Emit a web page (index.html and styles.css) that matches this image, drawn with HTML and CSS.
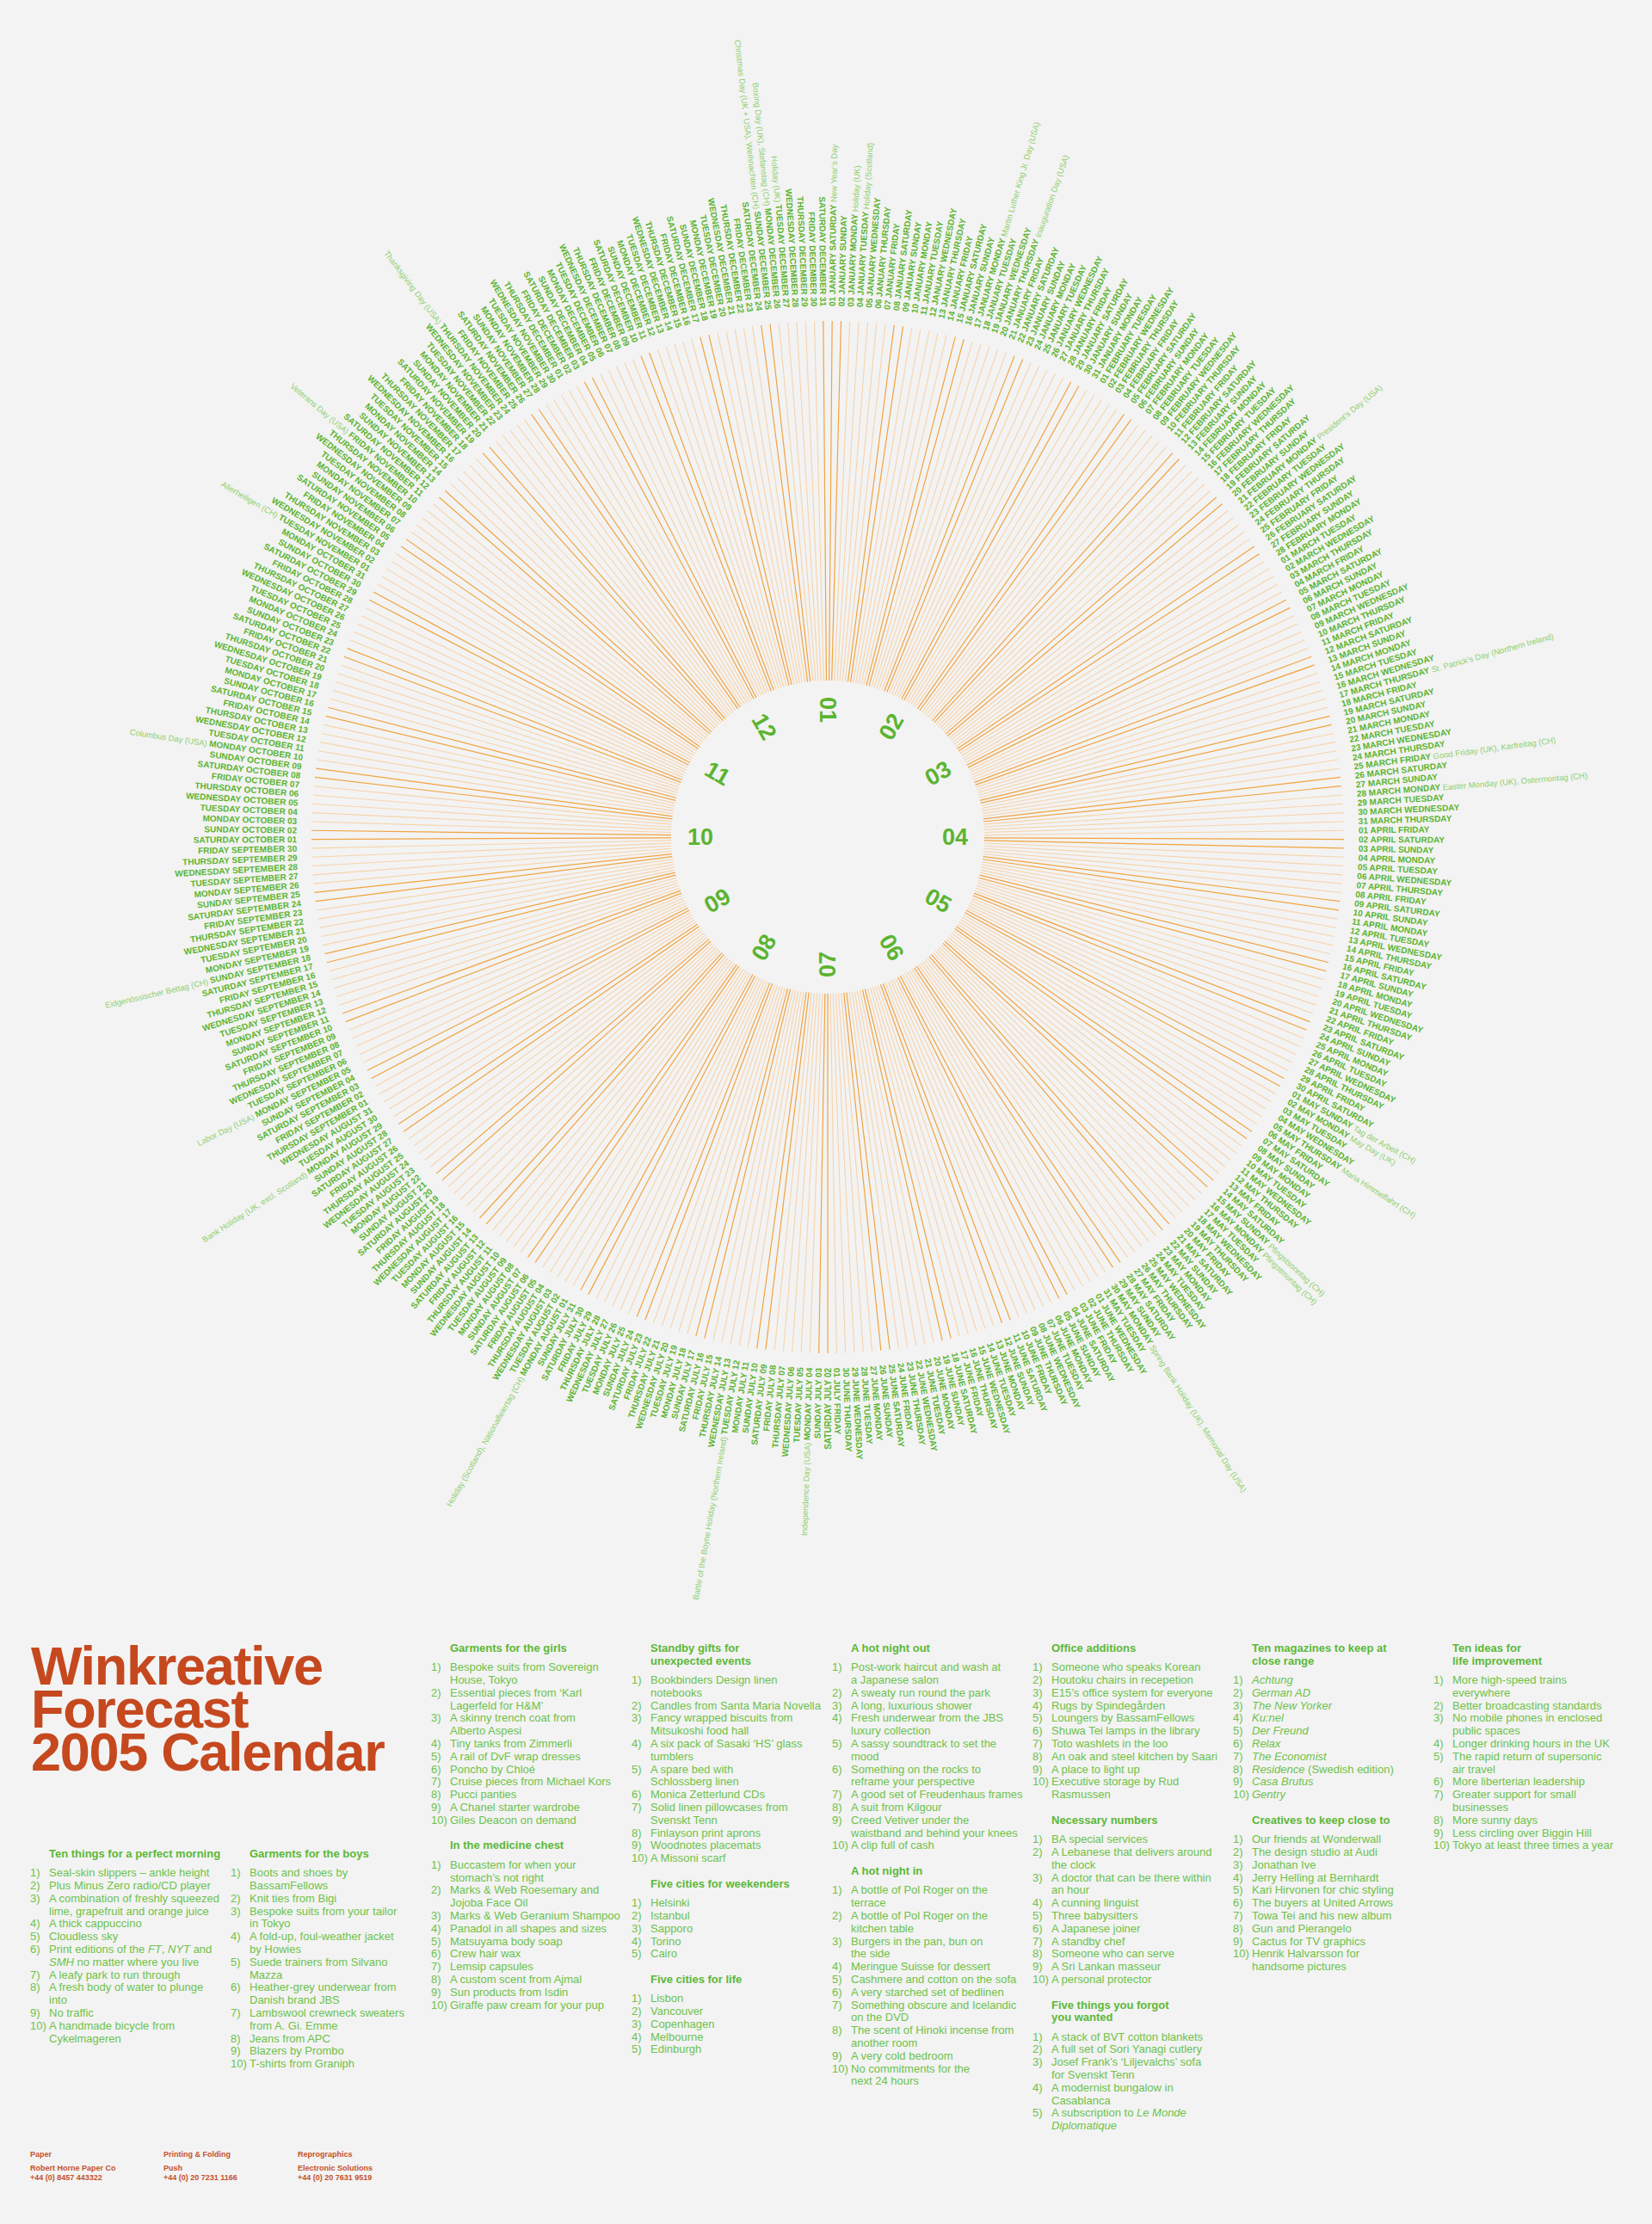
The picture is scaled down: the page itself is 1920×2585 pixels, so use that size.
FILE: index.html
```html
<!DOCTYPE html>
<html lang="en">
<head>
<meta charset="utf-8">
<title>Winkreative Forecast 2005 Calendar</title>
<link rel="stylesheet" href="styles.css">
</head>
<body>
<div class="chart">
  <svg id="wheel" width="1920" height="1890" viewBox="0 0 1920 1890" xmlns="http://www.w3.org/2000/svg"></svg>
</div>

<section class="info">
  <div class="left">
    <h1 class="title">Winkreative<br>Forecast<br>2005 Calendar</h1>
    <div class="left-lists">
      <div class="col">
        <h2 class="head">Ten things for a perfect morning</h2>
        <ol class="list">
          <li><span class="n">1)</span><span class="t">Seal-skin slippers – ankle height</span></li>
          <li><span class="n">2)</span><span class="t">Plus Minus Zero radio/CD player</span></li>
          <li><span class="n">3)</span><span class="t">A combination of freshly squeezed<br>lime, grapefruit and orange juice</span></li>
          <li><span class="n">4)</span><span class="t">A thick cappuccino</span></li>
          <li><span class="n">5)</span><span class="t">Cloudless sky</span></li>
          <li><span class="n">6)</span><span class="t">Print editions of the <i>FT</i>, <i>NYT</i> and<br><i>SMH</i> no matter where you live</span></li>
          <li><span class="n">7)</span><span class="t">A leafy park to run through</span></li>
          <li><span class="n">8)</span><span class="t">A fresh body of water to plunge<br>into</span></li>
          <li><span class="n">9)</span><span class="t">No traffic</span></li>
          <li><span class="n">10)</span><span class="t">A handmade bicycle from<br>Cykelmageren</span></li>
        </ol>
      </div>
      <div class="col">
        <h2 class="head">Garments for the boys</h2>
        <ol class="list">
          <li><span class="n">1)</span><span class="t">Boots and shoes by<br>BassamFellows</span></li>
          <li><span class="n">2)</span><span class="t">Knit ties from Bigi</span></li>
          <li><span class="n">3)</span><span class="t">Bespoke suits from your tailor<br>in Tokyo</span></li>
          <li><span class="n">4)</span><span class="t">A fold-up, foul-weather jacket<br>by Howies</span></li>
          <li><span class="n">5)</span><span class="t">Suede trainers from Silvano<br>Mazza</span></li>
          <li><span class="n">6)</span><span class="t">Heather-grey underwear from<br>Danish brand JBS</span></li>
          <li><span class="n">7)</span><span class="t">Lambswool crewneck sweaters<br>from A. Gi. Emme</span></li>
          <li><span class="n">8)</span><span class="t">Jeans from APC</span></li>
          <li><span class="n">9)</span><span class="t">Blazers by Prombo</span></li>
          <li><span class="n">10)</span><span class="t">T-shirts from Graniph</span></li>
        </ol>
      </div>
    </div>
  </div>

  <div class="col">
    <h2 class="head">Garments for the girls</h2>
    <ol class="list">
      <li><span class="n">1)</span><span class="t">Bespoke suits from Sovereign<br>House, Tokyo</span></li>
      <li><span class="n">2)</span><span class="t">Essential pieces from ‘Karl<br>Lagerfeld for H&amp;M’</span></li>
      <li><span class="n">3)</span><span class="t">A skinny trench coat from<br>Alberto Aspesi</span></li>
      <li><span class="n">4)</span><span class="t">Tiny tanks from Zimmerli</span></li>
      <li><span class="n">5)</span><span class="t">A rail of DvF wrap dresses</span></li>
      <li><span class="n">6)</span><span class="t">Poncho by Chloé</span></li>
      <li><span class="n">7)</span><span class="t">Cruise pieces from Michael Kors</span></li>
      <li><span class="n">8)</span><span class="t">Pucci panties</span></li>
      <li><span class="n">9)</span><span class="t">A Chanel starter wardrobe</span></li>
      <li><span class="n">10)</span><span class="t">Giles Deacon on demand</span></li>
    </ol>
    <h2 class="head">In the medicine chest</h2>
    <ol class="list">
      <li><span class="n">1)</span><span class="t">Buccastem for when your<br>stomach’s not right</span></li>
      <li><span class="n">2)</span><span class="t">Marks &amp; Web Roesemary and<br>Jojoba Face Oil</span></li>
      <li><span class="n">3)</span><span class="t">Marks &amp; Web Geranium Shampoo</span></li>
      <li><span class="n">4)</span><span class="t">Panadol in all shapes and sizes</span></li>
      <li><span class="n">5)</span><span class="t">Matsuyama body soap</span></li>
      <li><span class="n">6)</span><span class="t">Crew hair wax</span></li>
      <li><span class="n">7)</span><span class="t">Lemsip capsules</span></li>
      <li><span class="n">8)</span><span class="t">A custom scent from Ajmal</span></li>
      <li><span class="n">9)</span><span class="t">Sun products from Isdin</span></li>
      <li><span class="n">10)</span><span class="t">Giraffe paw cream for your pup</span></li>
    </ol>
  </div>

  <div class="col">
    <h2 class="head">Standby gifts for<br>unexpected events</h2>
    <ol class="list">
      <li><span class="n">1)</span><span class="t">Bookbinders Design linen<br>notebooks</span></li>
      <li><span class="n">2)</span><span class="t">Candles from Santa Maria Novella</span></li>
      <li><span class="n">3)</span><span class="t">Fancy wrapped biscuits from<br>Mitsukoshi food hall</span></li>
      <li><span class="n">4)</span><span class="t">A six pack of Sasaki ‘HS’ glass<br>tumblers</span></li>
      <li><span class="n">5)</span><span class="t">A spare bed with<br>Schlossberg linen</span></li>
      <li><span class="n">6)</span><span class="t">Monica Zetterlund CDs</span></li>
      <li><span class="n">7)</span><span class="t">Solid linen pillowcases from<br>Svenskt Tenn</span></li>
      <li><span class="n">8)</span><span class="t">Finlayson print aprons</span></li>
      <li><span class="n">9)</span><span class="t">Woodnotes placemats</span></li>
      <li><span class="n">10)</span><span class="t">A Missoni scarf</span></li>
    </ol>
    <h2 class="head">Five cities for weekenders</h2>
    <ol class="list">
      <li><span class="n">1)</span><span class="t">Helsinki</span></li>
      <li><span class="n">2)</span><span class="t">Istanbul</span></li>
      <li><span class="n">3)</span><span class="t">Sapporo</span></li>
      <li><span class="n">4)</span><span class="t">Torino</span></li>
      <li><span class="n">5)</span><span class="t">Cairo</span></li>
    </ol>
    <h2 class="head">Five cities for life</h2>
    <ol class="list">
      <li><span class="n">1)</span><span class="t">Lisbon</span></li>
      <li><span class="n">2)</span><span class="t">Vancouver</span></li>
      <li><span class="n">3)</span><span class="t">Copenhagen</span></li>
      <li><span class="n">4)</span><span class="t">Melbourne</span></li>
      <li><span class="n">5)</span><span class="t">Edinburgh</span></li>
    </ol>
  </div>

  <div class="col">
    <h2 class="head">A hot night out</h2>
    <ol class="list">
      <li><span class="n">1)</span><span class="t">Post-work haircut and wash at<br>a Japanese salon</span></li>
      <li><span class="n">2)</span><span class="t">A sweaty run round the park</span></li>
      <li><span class="n">3)</span><span class="t">A long, luxurious shower</span></li>
      <li><span class="n">4)</span><span class="t">Fresh underwear from the JBS<br>luxury collection</span></li>
      <li><span class="n">5)</span><span class="t">A sassy soundtrack to set the<br>mood</span></li>
      <li><span class="n">6)</span><span class="t">Something on the rocks to<br>reframe your perspective</span></li>
      <li><span class="n">7)</span><span class="t">A good set of Freudenhaus frames</span></li>
      <li><span class="n">8)</span><span class="t">A suit from Kilgour</span></li>
      <li><span class="n">9)</span><span class="t">Creed Vetiver under the<br>waistband and behind your knees</span></li>
      <li><span class="n">10)</span><span class="t">A clip full of cash</span></li>
    </ol>
    <h2 class="head">A hot night in</h2>
    <ol class="list">
      <li><span class="n">1)</span><span class="t">A bottle of Pol Roger on the<br>terrace</span></li>
      <li><span class="n">2)</span><span class="t">A bottle of Pol Roger on the<br>kitchen table</span></li>
      <li><span class="n">3)</span><span class="t">Burgers in the pan, bun on<br>the side</span></li>
      <li><span class="n">4)</span><span class="t">Meringue Suisse for dessert</span></li>
      <li><span class="n">5)</span><span class="t">Cashmere and cotton on the sofa</span></li>
      <li><span class="n">6)</span><span class="t">A very starched set of bedlinen</span></li>
      <li><span class="n">7)</span><span class="t">Something obscure and Icelandic<br>on the DVD</span></li>
      <li><span class="n">8)</span><span class="t">The scent of Hinoki incense from<br>another room</span></li>
      <li><span class="n">9)</span><span class="t">A very cold bedroom</span></li>
      <li><span class="n">10)</span><span class="t">No commitments for the<br>next 24 hours</span></li>
    </ol>
  </div>

  <div class="col">
    <h2 class="head">Office additions</h2>
    <ol class="list">
      <li><span class="n">1)</span><span class="t">Someone who speaks Korean</span></li>
      <li><span class="n">2)</span><span class="t">Houtoku chairs in recepetion</span></li>
      <li><span class="n">3)</span><span class="t">E15’s office system for everyone</span></li>
      <li><span class="n">4)</span><span class="t">Rugs by Spindegården</span></li>
      <li><span class="n">5)</span><span class="t">Loungers by BassamFellows</span></li>
      <li><span class="n">6)</span><span class="t">Shuwa Tei lamps in the library</span></li>
      <li><span class="n">7)</span><span class="t">Toto washlets in the loo</span></li>
      <li><span class="n">8)</span><span class="t">An oak and steel kitchen by Saari</span></li>
      <li><span class="n">9)</span><span class="t">A place to light up</span></li>
      <li><span class="n">10)</span><span class="t">Executive storage by Rud<br>Rasmussen</span></li>
    </ol>
    <h2 class="head">Necessary numbers</h2>
    <ol class="list">
      <li><span class="n">1)</span><span class="t">BA special services</span></li>
      <li><span class="n">2)</span><span class="t">A Lebanese that delivers around<br>the clock</span></li>
      <li><span class="n">3)</span><span class="t">A doctor that can be there within<br>an hour</span></li>
      <li><span class="n">4)</span><span class="t">A cunning linguist</span></li>
      <li><span class="n">5)</span><span class="t">Three babysitters</span></li>
      <li><span class="n">6)</span><span class="t">A Japanese joiner</span></li>
      <li><span class="n">7)</span><span class="t">A standby chef</span></li>
      <li><span class="n">8)</span><span class="t">Someone who can serve</span></li>
      <li><span class="n">9)</span><span class="t">A Sri Lankan masseur</span></li>
      <li><span class="n">10)</span><span class="t">A personal protector</span></li>
    </ol>
    <h2 class="head">Five things you forgot<br>you wanted</h2>
    <ol class="list">
      <li><span class="n">1)</span><span class="t">A stack of BVT cotton blankets</span></li>
      <li><span class="n">2)</span><span class="t">A full set of Sori Yanagi cutlery</span></li>
      <li><span class="n">3)</span><span class="t">Josef Frank’s ‘Liljevalchs’ sofa<br>for Svenskt Tenn</span></li>
      <li><span class="n">4)</span><span class="t">A modernist bungalow in<br>Casablanca</span></li>
      <li><span class="n">5)</span><span class="t">A subscription to <i>Le Monde</i><br><i>Diplomatique</i></span></li>
    </ol>
  </div>

  <div class="col">
    <h2 class="head">Ten magazines to keep at<br>close range</h2>
    <ol class="list">
      <li><span class="n">1)</span><span class="t"><i>Achtung</i></span></li>
      <li><span class="n">2)</span><span class="t"><i>German AD</i></span></li>
      <li><span class="n">3)</span><span class="t"><i>The New Yorker</i></span></li>
      <li><span class="n">4)</span><span class="t"><i>Ku:nel</i></span></li>
      <li><span class="n">5)</span><span class="t"><i>Der Freund</i></span></li>
      <li><span class="n">6)</span><span class="t"><i>Relax</i></span></li>
      <li><span class="n">7)</span><span class="t"><i>The Economist</i></span></li>
      <li><span class="n">8)</span><span class="t"><i>Residence</i> (Swedish edition)</span></li>
      <li><span class="n">9)</span><span class="t"><i>Casa Brutus</i></span></li>
      <li><span class="n">10)</span><span class="t"><i>Gentry</i></span></li>
    </ol>
    <h2 class="head">Creatives to keep close to</h2>
    <ol class="list">
      <li><span class="n">1)</span><span class="t">Our friends at Wonderwall</span></li>
      <li><span class="n">2)</span><span class="t">The design studio at Audi</span></li>
      <li><span class="n">3)</span><span class="t">Jonathan Ive</span></li>
      <li><span class="n">4)</span><span class="t">Jerry Helling at Bernhardt</span></li>
      <li><span class="n">5)</span><span class="t">Kari Hirvonen for chic styling</span></li>
      <li><span class="n">6)</span><span class="t">The buyers at United Arrows</span></li>
      <li><span class="n">7)</span><span class="t">Towa Tei and his new album</span></li>
      <li><span class="n">8)</span><span class="t">Gun and Pierangelo</span></li>
      <li><span class="n">9)</span><span class="t">Cactus for TV graphics</span></li>
      <li><span class="n">10)</span><span class="t">Henrik Halvarsson for<br>handsome pictures</span></li>
    </ol>
  </div>

  <div class="col">
    <h2 class="head">Ten ideas for<br>life improvement</h2>
    <ol class="list">
      <li><span class="n">1)</span><span class="t">More high-speed trains<br>everywhere</span></li>
      <li><span class="n">2)</span><span class="t">Better broadcasting standards</span></li>
      <li><span class="n">3)</span><span class="t">No mobile phones in enclosed<br>public spaces</span></li>
      <li><span class="n">4)</span><span class="t">Longer drinking hours in the UK</span></li>
      <li><span class="n">5)</span><span class="t">The rapid return of supersonic<br>air travel</span></li>
      <li><span class="n">6)</span><span class="t">More liberterian leadership</span></li>
      <li><span class="n">7)</span><span class="t">Greater support for small<br>businesses</span></li>
      <li><span class="n">8)</span><span class="t">More sunny days</span></li>
      <li><span class="n">9)</span><span class="t">Less circling over Biggin Hill</span></li>
      <li><span class="n">10)</span><span class="t">Tokyo at least three times a year</span></li>
    </ol>
  </div>
</section>

<footer class="credits">
  <div class="credit">
    <div class="role">Paper</div>
    <div>Robert Horne Paper Co</div>
    <div>+44 (0) 8457 443322</div>
  </div>
  <div class="credit">
    <div class="role">Printing &amp; Folding</div>
    <div>Push</div>
    <div>+44 (0) 20 7231 1166</div>
  </div>
  <div class="credit">
    <div class="role">Reprographics</div>
    <div>Electronic Solutions</div>
    <div>+44 (0) 20 7631 9519</div>
  </div>
</footer>

<script src="script.js"></script>
</body>
</html>
```

FILE: styles.css
```css
* { box-sizing: border-box; }
html, body { margin: 0; padding: 0; }
body {
  background: #f3f3f3;
  width: 1920px;
  min-height: 2585px;
  font-family: "Liberation Sans", Arial, sans-serif;
  overflow-x: hidden;
}

/* radial calendar */
.chart { height: 1890px; }
.chart svg { display: block; }
.day-line { stroke: #f7d3ab; stroke-width: 1.1; }
.day-line.weekend { stroke: #f2a33f; stroke-width: 1.2; }
.day-label {
  font-family: "Liberation Sans", Arial, sans-serif;
  font-weight: 700;
  font-size: 10px;
  fill: #5bb431;
  dominant-baseline: central;
  white-space: pre;
}
.day-label .holiday {
  font-weight: 400;
  font-size: 9.5px;
  fill: #8fcf6e;
}
.month-num {
  font-family: "Liberation Sans", Arial, sans-serif;
  font-weight: 700;
  font-size: 27px;
  fill: #5bb431;
  dominant-baseline: central;
  text-anchor: middle;
}

/* text block */
.info {
  display: grid;
  grid-template-columns: 466px repeat(6, 233px);
  padding: 19px 0 0 35px;
  align-items: start;
}
.title {
  margin: 2px 0 0 1px;
  font-family: "Liberation Sans", Arial, sans-serif;
  font-weight: 700;
  font-size: 63px;
  line-height: 50px;
  letter-spacing: -1.3px;
  color: #c5481f;
}
.left-lists {
  display: grid;
  grid-template-columns: 233px 233px;
  margin-top: 87px;
}
.col { font-size: 13px; line-height: 14.8px; color: #6ec24a; }
.head {
  margin: 14.8px 0 7.5px 22px;
  font-size: 13px;
  line-height: 14.8px;
  font-weight: 700;
  color: #5cb837;
}
.head:first-child { margin-top: 0; }
.list { list-style: none; margin: 0; padding: 0; }
.list li {
  display: grid;
  grid-template-columns: 22px 1fr;
}
.list .t { white-space: nowrap; }

/* credits */
.credits {
  display: grid;
  grid-template-columns: 155px 156px 200px;
  padding-left: 35px;
  margin-top: 20px;
  font-size: 9px;
  line-height: 11px;
  font-weight: 700;
  color: #c5512a;
}
.credit .role { margin-bottom: 5px; }
```

FILE: script.js
```js
(function () {
  var NS = 'http://www.w3.org/2000/svg';
  var svg = document.getElementById('wheel');
  var CX = 962, CY = 973, R1 = 182, R2 = 600, RT = 617, RM = 148;
  var MONTHS = ['JANUARY','FEBRUARY','MARCH','APRIL','MAY','JUNE','JULY','AUGUST','SEPTEMBER','OCTOBER','NOVEMBER','DECEMBER'];
  var DAYS = ['SUNDAY','MONDAY','TUESDAY','WEDNESDAY','THURSDAY','FRIDAY','SATURDAY'];
  var HOL = {
    '1-1': "New Year\u2019s Day",
    '1-3': 'Holiday (UK)',
    '1-4': 'Holiday (Scotland)',
    '1-17': 'Martin Luther King Jr. Day (USA)',
    '1-20': 'Inauguration Day (USA)',
    '2-21': "President\u2019s Day (USA)",
    '3-17': "St. Patrick\u2019s Day (Northern Ireland)",
    '3-25': 'Good Friday (UK), Karfreitag (CH)',
    '3-28': 'Easter Monday (UK), Ostermontag (CH)',
    '5-1': 'Tag der Arbeit (CH)',
    '5-2': 'May Day (UK)',
    '5-5': 'Maria Himmelfahrt (CH)',
    '5-15': 'Pfingstsonntag (CH)',
    '5-16': 'Pfingstmontag (CH)',
    '5-30': 'Spring Bank Holiday (UK), Memorial Day (USA)',
    '7-4': 'Independence Day (USA)',
    '7-12': 'Battle of the Boyne Holiday (Northern Ireland)',
    '8-1': 'Holiday (Scotland), Nationalfeiertag (CH)',
    '8-29': 'Bank Holiday (UK, excl. Scotland)',
    '9-5': 'Labor Day (USA)',
    '9-18': 'Eidgen\u00f6ssischer Bettag (CH)',
    '10-10': 'Columbus Day (USA)',
    '11-1': 'Allerheiligen (CH)',
    '11-11': 'Veterans Day (USA)',
    '11-24': 'Thanksgiving Day (USA)',
    '12-25': 'Christmas Day (UK + USA), Weihnachten (CH)',
    '12-26': 'Boxing Day (UK), Stefanstag (CH)',
    '12-27': 'Holiday (UK)'
  };

  function el(name, attrs) {
    var e = document.createElementNS(NS, name);
    for (var k in attrs) e.setAttribute(k, attrs[k]);
    return e;
  }

  var gLines = el('g', { 'class': 'lines' });
  var gText = el('g', { 'class': 'labels' });
  var gMonths = el('g', { 'class': 'months' });

  for (var i = 0; i < 365; i++) {
    var dt = new Date(Date.UTC(2005, 0, 1 + i));
    var m = dt.getUTCMonth(), d = dt.getUTCDate(), w = dt.getUTCDay();
    var th = (i + 0.5) * 360 / 365;
    var a = th * Math.PI / 180, s = Math.sin(a), c = Math.cos(a);

    gLines.appendChild(el('line', {
      'x1': (CX + R1 * s).toFixed(2), 'y1': (CY - R1 * c).toFixed(2),
      'x2': (CX + R2 * s).toFixed(2), 'y2': (CY - R2 * c).toFixed(2),
      'class': (w === 0 || w === 6) ? 'day-line weekend' : 'day-line'
    }));

    var dd = (d < 10 ? '0' : '') + d;
    var hol = HOL[(m + 1) + '-' + d];
    var t;
    if (th < 180) {
      t = el('text', {
        'class': 'day-label', 'x': CX + RT, 'y': CY,
        'transform': 'rotate(' + (th - 90).toFixed(3) + ' ' + CX + ' ' + CY + ')'
      });
      t.appendChild(document.createTextNode(dd + ' ' + MONTHS[m] + ' ' + DAYS[w]));
      if (hol) {
        var sp = el('tspan', { 'class': 'holiday' });
        sp.textContent = ' ' + hol;
        t.appendChild(sp);
      }
    } else {
      t = el('text', {
        'class': 'day-label', 'x': CX - RT, 'y': CY, 'text-anchor': 'end',
        'transform': 'rotate(' + (th + 90).toFixed(3) + ' ' + CX + ' ' + CY + ')'
      });
      if (hol) {
        var sp2 = el('tspan', { 'class': 'holiday' });
        sp2.textContent = hol + ' ';
        t.appendChild(sp2);
      }
      t.appendChild(document.createTextNode(DAYS[w] + ' ' + MONTHS[m] + ' ' + dd));
    }
    gText.appendChild(t);
  }

  for (var k = 0; k < 12; k++) {
    var mt = k * 30, ma = mt * Math.PI / 180;
    var x = CX + RM * Math.sin(ma), y = CY - RM * Math.cos(ma);
    var rot = (mt > 0 && mt < 180) ? mt - 90 : mt + 90;
    var n = el('text', {
      'class': 'month-num', 'x': x.toFixed(2), 'y': y.toFixed(2),
      'transform': 'rotate(' + rot + ' ' + x.toFixed(2) + ' ' + y.toFixed(2) + ')'
    });
    n.textContent = (k + 1 < 10 ? '0' : '') + (k + 1);
    gMonths.appendChild(n);
  }

  svg.appendChild(gLines);
  svg.appendChild(gText);
  svg.appendChild(gMonths);
})();
```
